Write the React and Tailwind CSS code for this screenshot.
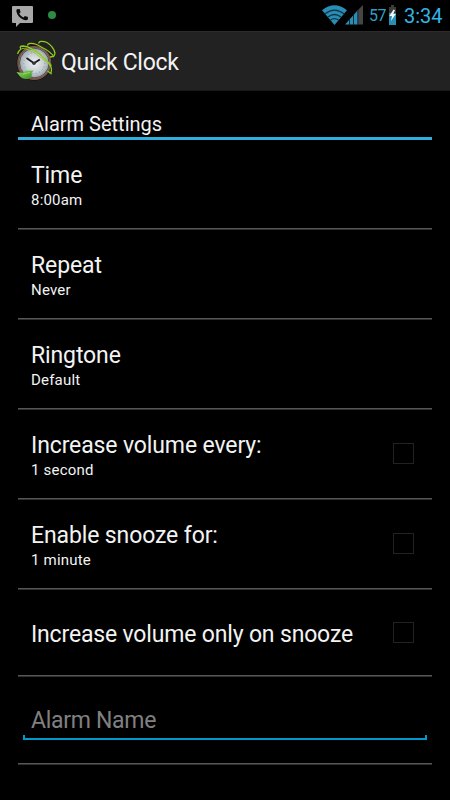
const SETTINGS = [
  { title: 'Time', value: '8:00am' },
  { title: 'Repeat', value: 'Never' },
  { title: 'Ringtone', value: 'Default' },
  { title: 'Increase volume every:', value: '1 second', checkbox: true },
  { title: 'Enable snooze for:', value: '1 minute', checkbox: true },
];

const MissedCallIcon = () => (
  <svg width="21" height="22" viewBox="0 0 21 22">
    <path d="M1 0H20Q21 0 21 1V16Q21 17 20 17H8L4 21V17H1Q0 17 0 16V1Q0 0 1 0Z" fill="#a8a8a8" />
    <path d="M5 3.2L7.6 3L8.6 6.2L7.3 7.3C8 9.3 9.6 10.8 11.6 11.4L12.8 10L16 11L15.8 13.6C14.8 14.4 13 14.3 11 13.5C7.5 12 5 9 4.5 5.8C4.3 4.7 4.4 3.8 5 3.2Z" fill="#080808" />
  </svg>
);

const WifiIcon = () => (
  <svg width="25" height="20" viewBox="0 0 25 20">
    <path d="M0 5.2Q12.5 -4.5 25 5.2L12.5 20Z" fill="#2a8db3" />
    <path d="M3 8.8Q12.5 1.4 22 8.8M6 12Q12.5 7 19 12M8.5 15Q12.5 12.2 16.5 15" fill="none" stroke="#0b3444" strokeWidth="1.3" />
  </svg>
);

const SignalIcon = () => (
  <svg width="18" height="20" viewBox="0 0 18 20">
    <path d="M0 19.5L13 5V19.5Z" fill="#2a8db3" />
    <path d="M13 5L18 0V19.5H13Z" fill="#454545" />
    <path d="M4.5 14V20M8.5 9.5V20M12.8 5V20" stroke="#0a2029" strokeWidth="0.9" />
  </svg>
);

const BatteryIcon = () => (
  <svg width="7" height="20" viewBox="0 0 7 20">
    <path d="M2 0H5V2H7V8H0V2H2Z" fill="#3c3c3c" />
    <path d="M0 8H7V20H0Z" fill="#2a8db3" />
    <path d="M4.6 4.5L0.3 11H3L2 16L6.8 9H4.2L6 5.3Z" fill="#f4f4f4" />
  </svg>
);

const ClockLogo = () => (
  <svg width="42" height="42" viewBox="0 0 42 42">
    <defs>
      <radialGradient id="face">
        <stop offset="0" stopColor="#edf1f3" />
        <stop offset="0.6" stopColor="#c5cdd2" />
        <stop offset="1" stopColor="#8e999f" />
      </radialGradient>
      <linearGradient id="leaf" x1="0" y1="0" x2="1" y2="1">
        <stop offset="0" stopColor="#9bdc5c" />
        <stop offset="1" stopColor="#2f8c24" />
      </linearGradient>
    </defs>
    <circle cx="19.3" cy="23" r="17.7" fill="#17100d" />
    <circle cx="19.3" cy="23" r="16.2" fill="url(#face)" stroke="#795443" strokeWidth="1.7" />
    <circle cx="19.3" cy="23" r="14.8" fill="none" stroke="#353839" strokeWidth="0.8" />
    <circle cx="19.3" cy="23" r="10.5" fill="none" stroke="#7e8990" strokeWidth="0.8" strokeDasharray="1 2.5" />
    <path d="M11.5 18L19 23.2L24.8 19.5" fill="none" stroke="#151515" strokeWidth="1.7" />
    <circle cx="19" cy="23.2" r="1.8" fill="#373737" />
    <g fill="none" stroke="#8fcb1f" strokeWidth="1.3">
      <path d="M2.5 14C3.5 11.5 4.5 10 6 9C4.5 7.5 5 6 8 6C17 6.5 25 14 30 19C33 22 36 26 36.5 29L36 33.5L32.5 31" />
      <path d="M7 8.5C16 8.5 23 16 29 20C32 22 36 22.5 36.5 26" strokeWidth="0.9" />
      <path d="M12.5 5.5C12.5 3 17 2.6 21.5 4.5C28 8 36 11 38.5 16.5L35 17" />
      <path d="M24 3.5C23 1 28 0.8 32 2.5C36 5 39 9 40 13L39 16" />
    </g>
    <path d="M1.5 32L8 33L10 31L18.5 30.5L16.5 33Q18 37 14 38.5Q9 40 5.5 37Z" fill="url(#leaf)" />
    <path d="M8 34L15 32.5" stroke="#a5da74" strokeWidth="0.8" />
  </svg>
);

const StatusBar = () => (
  <div className="flex h-[31px] justify-between pl-3 pr-2">
    <div className="flex gap-[15px] pt-1.5">
      <MissedCallIcon />
      <div className="mt-[5px] h-[8px] w-[8px] rounded-full bg-[#2c8c43]" />
    </div>
    <div className="flex items-start text-[#33b5e5]">
      <div className="-mr-[2px] pt-[5px]"><WifiIcon /></div>
      <div className="pt-[5px]"><SignalIcon /></div>
      <span className="ml-[6px] mt-[6px] w-[18px] text-[16px] leading-5 tracking-[-0.5px] text-[#2f9fc9]">57</span>
      <div className="ml-[2px] pt-[5px]"><BatteryIcon /></div>
      <span className="ml-[8px] mt-[4px] w-[38px] text-[20px] leading-6">3:34</span>
    </div>
  </div>
);

const Checkbox = () => <div className="mr-[18px] h-[21px] w-[21px] border border-[#222]" />;

const Divider = () => (
  <div className="h-[2px] border-t border-t-[#565656] bg-[#303030]" />
);

const SettingRow = ({ title, value, checkbox }) => (
  <>
    <div className="flex h-[88px] justify-between pl-[13px]">
      <div className="pt-[22px]">
        <div className="text-[23px] leading-7 tracking-[-0.12px]">{title}</div>
        <div className="text-[15px] leading-5 tracking-[0.2px]">{value}</div>
      </div>
      {checkbox && <div className="pt-[33px]"><Checkbox /></div>}
    </div>
    <Divider />
  </>
);

export default function App() {
  return (
    <div className="h-[800px] w-[450px] overflow-hidden bg-black font-['Roboto',sans-serif] text-[#f3f3f3]">
      <StatusBar />
      <header className="flex h-[60px] items-center border-t border-b border-t-[#2b2b2b] border-b-[#191919] bg-[#222] pl-[15px]">
        <ClockLogo />
        <h1 className="ml-1 pt-[3px] text-[23px] leading-7 tracking-[-0.3px]">Quick Clock</h1>
      </header>
      <main className="px-[18px]">
        <h2 className="h-[49px] border-b-[3px] border-[#2eafde] pl-[13px] pt-[21px] text-[20px] leading-6">Alarm Settings</h2>
        {SETTINGS.map((s) => (
          <SettingRow key={s.title} {...s} />
        ))}
        <div className="flex h-[85px] items-center justify-between pl-[13px]">
          <span className="pt-[5px] text-[23px] leading-7 tracking-[-0.17px]">Increase volume only on snooze</span>
          <Checkbox />
        </div>
        <Divider />
        <div className="h-[86px] px-[5px] pt-[30px]">
          <div className="pl-2 text-[23px] leading-7 tracking-[-0.3px] text-[#808080]">Alarm Name</div>
          <div className="h-[5px] border-x-2 border-b-2 border-[#0099cc]" />
        </div>
        <Divider />
      </main>
    </div>
  );
}
